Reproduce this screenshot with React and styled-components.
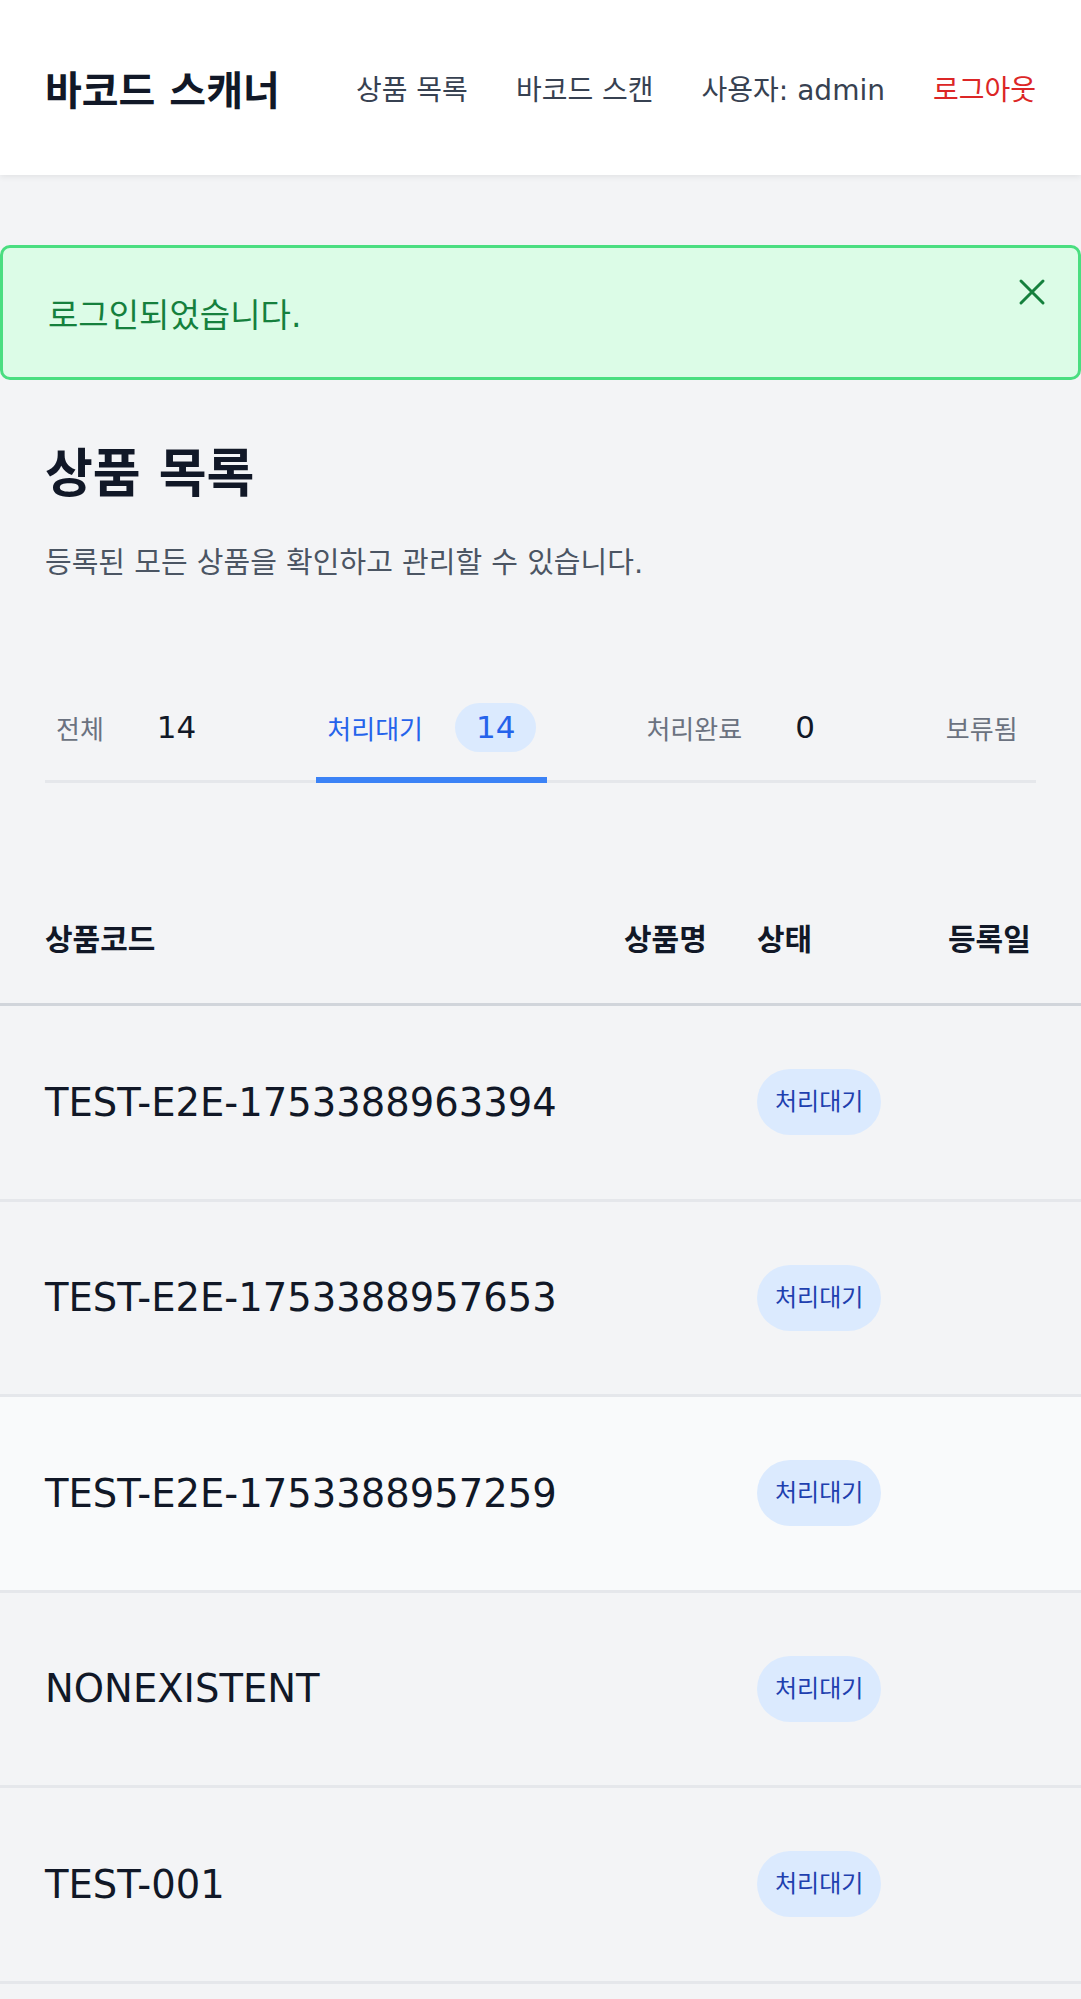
import styled, { createGlobalStyle } from 'styled-components';

const GlobalStyle = createGlobalStyle`
  html, body {
    margin: 0;
    padding: 0;
    background: #f3f4f6;
  }
  body {
    font-family: 'DejaVu Sans', 'Noto Sans CJK KR', sans-serif;
    color: #111827;
    min-height: 1999px;
  }
  * {
    box-sizing: border-box;
  }
`;

const tabs = [
  { label: '전체', count: 14 },
  { label: '처리대기', count: 14, active: true },
  { label: '처리완료', count: 0 },
  { label: '보류됨' },
];

const products = [
  { code: 'TEST-E2E-1753388963394', status: '처리대기' },
  { code: 'TEST-E2E-1753388957653', status: '처리대기' },
  { code: 'TEST-E2E-1753388957259', status: '처리대기', hovered: true },
  { code: 'NONEXISTENT', status: '처리대기' },
  { code: 'TEST-001', status: '처리대기' },
];

function CloseIcon() {
  return (
    <svg width="28" height="28" viewBox="0 0 28 28" fill="none">
      <path d="M3 3L25 25M25 3L3 25" stroke="#15803d" strokeWidth="3" strokeLinecap="round" />
    </svg>
  );
}

export default function App() {
  return (
    <>
      <GlobalStyle />
      <Header>
        <Brand>바코드 스캐너</Brand>
        <Nav>
          <NavLink>상품 목록</NavLink>
          <NavLink>바코드 스캔</NavLink>
          <NavLink>사용자: admin</NavLink>
          <NavLink $danger>로그아웃</NavLink>
        </Nav>
      </Header>

      <Main>
        <Alert>
          <AlertText>로그인되었습니다.</AlertText>
          <CloseButton aria-label="닫기">
            <CloseIcon />
          </CloseButton>
        </Alert>

        <Section>
          <PageTitle>상품 목록</PageTitle>
          <PageSubtitle>등록된 모든 상품을 확인하고 관리할 수 있습니다.</PageSubtitle>

          <TabList>
            {tabs.map((tab) => (
              <Tab key={tab.label} $active={tab.active}>
                <TabLabel $active={tab.active}>{tab.label}</TabLabel>
                {tab.count !== undefined && <TabCount $active={tab.active}>{tab.count}</TabCount>}
              </Tab>
            ))}
          </TabList>
        </Section>

        <Table>
          <HeadRow>
            <HeadCell>상품코드</HeadCell>
            <HeadCell>상품명</HeadCell>
            <HeadCell>상태</HeadCell>
            <HeadCell>등록일</HeadCell>
          </HeadRow>
          {products.map((item) => (
            <BodyRow key={item.code} $hovered={item.hovered}>
              <CodeCell>{item.code}</CodeCell>
              <span />
              <StatusBadge>{item.status}</StatusBadge>
              <span />
            </BodyRow>
          ))}
        </Table>
      </Main>
    </>
  );
}

const Header = styled.header`
  height: 175px;
  padding: 0 45px;
  display: flex;
  align-items: center;
  justify-content: space-between;
  background: #ffffff;
  box-shadow: 0 2px 6px rgba(0, 0, 0, 0.07);
  position: relative;
  z-index: 1;
`;

const Brand = styled.h1`
  margin: 0;
  font-size: 40px;
  font-weight: 700;
  color: #111827;
  white-space: nowrap;
`;

const Nav = styled.nav`
  display: flex;
  align-items: center;
  gap: 48px;
`;

const NavLink = styled.span`
  font-size: 28px;
  white-space: nowrap;
  color: ${(props) => (props.$danger ? '#dc2626' : '#374151')};
  cursor: pointer;
`;

const Main = styled.main`
  padding-top: 70px;
`;

const Alert = styled.div`
  height: 135px;
  display: flex;
  justify-content: space-between;
  padding-left: 45px;
  background: #dcfce7;
  border: 3px solid #4ade80;
  border-radius: 10px;
`;

const AlertText = styled.p`
  margin: 0;
  align-self: center;
  font-size: 33px;
  color: #15803d;
`;

const CloseButton = styled.button`
  align-self: flex-start;
  margin: 30px 32px 0 0;
  padding: 0;
  border: none;
  background: none;
  line-height: 0;
  cursor: pointer;
`;

const Section = styled.section`
  padding: 0 45px;
`;

const PageTitle = styled.h2`
  margin: 52px 0 0;
  font-size: 52px;
  line-height: 84px;
  font-weight: 700;
  color: #111827;
`;

const PageSubtitle = styled.p`
  margin: 21px 0 0;
  font-size: 29px;
  line-height: 52px;
  color: #4b5563;
`;

const TabList = styled.div`
  margin-top: 72px;
  display: flex;
  gap: 88px;
  overflow: hidden;
  box-shadow: inset 0 -3px 0 #e5e7eb;
`;

const Tab = styled.div`
  flex-shrink: 0;
  display: flex;
  align-items: center;
  gap: 32px;
  height: 122px;
  padding: 42px 11px 25px;
  border-bottom: 6px solid ${(props) => (props.$active ? '#3b82f6' : 'transparent')};
  white-space: nowrap;
`;

const TabLabel = styled.span`
  font-size: 26px;
  color: ${(props) => (props.$active ? '#2563eb' : '#6b7280')};
`;

const TabCount = styled.span`
  height: 49px;
  line-height: 49px;
  padding: 0 21px;
  border-radius: 25px;
  font-size: 31px;
  background: ${(props) => (props.$active ? '#dbeafe' : 'transparent')};
  color: ${(props) => (props.$active ? '#2563eb' : '#111827')};
`;

const Table = styled.div`
  margin-top: 88px;
`;

const RowGrid = styled.div`
  display: grid;
  grid-template-columns: 579px 133px 191px 1fr;
  align-items: center;
  padding-left: 45px;
`;

const HeadRow = styled(RowGrid)`
  height: 135px;
  border-bottom: 3px solid #d1d5db;
`;

const HeadCell = styled.span`
  font-size: 30px;
  font-weight: 600;
  color: #111827;
  white-space: nowrap;
`;

const BodyRow = styled(RowGrid)`
  height: 195.5px;
  border-bottom: 3px solid #e5e7eb;
  background: ${(props) => (props.$hovered ? '#f9fafb' : 'transparent')};
`;

const CodeCell = styled.span`
  font-size: 38.5px;
  color: #111827;
  white-space: nowrap;
`;

const StatusBadge = styled.span`
  justify-self: start;
  height: 66px;
  line-height: 66px;
  padding: 0 18px;
  border-radius: 33px;
  font-size: 24px;
  background: #dbeafe;
  color: #1e40af;
  white-space: nowrap;
`;
